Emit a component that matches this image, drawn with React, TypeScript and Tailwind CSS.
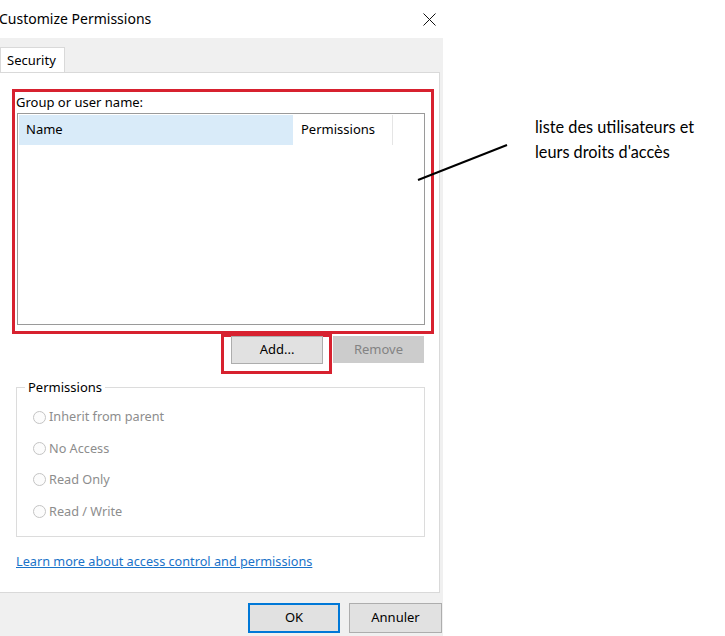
import React from 'react';

const options = ['Inherit from parent', 'No Access', 'Read Only', 'Read / Write'];

export default function App() {
  return (
    <div
      className="relative flex h-[636px] w-[725px] overflow-hidden bg-white text-[12.7px] text-black"
      style={{ fontFamily: '"Noto Sans", "Liberation Sans", sans-serif' }}
    >
      {/* dialog */}
      <div className="flex w-[443px] flex-col">
        <div className="flex h-[38px] items-center justify-between bg-white">
          <span className="-ml-[1px] text-[14px] leading-none">Customize Permissions</span>
          <svg width="13" height="13" viewBox="0 0 13 13" className="mr-[7px]">
            <path d="M0.5 0.5 L12.5 12.5 M12.5 0.5 L0.5 12.5" stroke="#111" strokeWidth="1" />
          </svg>
        </div>

        <div className="flex flex-1 flex-col bg-[#f0f0f0]">
          <div className="mt-[9px] flex">
            <div className="-mb-[1px] flex h-[26px] w-[65px] items-center border border-b-0 border-[#d9d9d9] bg-white pl-[6px] text-[13px]">
              Security
            </div>
          </div>

          <div className="mr-[3px] flex h-[521px] flex-col border border-l-0 border-[#d9d9d9] bg-white pl-[12px]">
            {/* user list */}
            <div className="mt-[16px] flex h-[245px] w-[422px] flex-col border-[3px] border-[#d7212f]">
              <div className="flex h-[21px] items-center pl-[1px] text-[13px]">Group or user name:</div>
              <div className="ml-[2px] flex h-[212px] w-[408px] flex-col border border-[#9a9a9a] p-[1px]">
                <div className="flex h-[30px] text-[13px]">
                  <div className="flex w-[274px] items-center bg-[#d9ebf9] pl-[7px]">Name</div>
                  <div className="flex w-[100px] items-center border-r border-[#e5e5e5] pl-[8px]">Permissions</div>
                </div>
              </div>
            </div>

            {/* buttons */}
            <div className="ml-[209px] flex">
              <div className="h-[40px] w-[111px] border-[3px] border-[#d7212f] pl-[7px]">
                <button className="mt-[-1px] h-[28px] w-[92px] border border-[#adadad] bg-[#e1e1e1] text-[13px]">
                  Add...
                </button>
              </div>
              <button className="ml-[1px] mt-[2px] h-[27px] w-[91px] bg-[#cccccc] text-[13px] text-[#838383]">
                Remove
              </button>
            </div>

            {/* permissions group */}
            <fieldset className="ml-[4px] mt-[5px] h-[158px] w-[409px] border border-[#dcdcdc]">
              <legend className="ml-[8px] px-[3px] text-[13px] leading-[16px]">Permissions</legend>
              <div className="mt-[13px] flex flex-col gap-[13.4px] pl-[16px]">
                {options.map((o) => (
                  <label key={o} className="flex h-[18px] items-center gap-[3px] text-[#8d8d8d]">
                    <span className="h-[13px] w-[13px] rounded-full border border-[#c4c4c4] bg-[#fcfcfc]" />
                    {o}
                  </label>
                ))}
              </div>
            </fieldset>

            <a className="ml-[4px] mt-[15px] w-fit leading-[18px] text-[#1a73c9] underline decoration-[#1a73c9]">
              Learn more about access control and permissions
            </a>
          </div>

          {/* footer */}
          <div className="mr-[1px] mt-[10px] flex justify-end gap-[9px]">
            <button className="h-[30px] w-[92px] border border-[#0078d7] bg-[#e1e1e1] text-[13px] shadow-[inset_0_0_0_1px_#0078d7]">
              OK
            </button>
            <button className="h-[30px] w-[93px] border border-[#adadad] bg-[#e1e1e1] text-[13px]">
              Annuler
            </button>
          </div>
        </div>
      </div>

      {/* annotation */}
      <div
        className="ml-[92px] mt-[114px] text-[16.3px] leading-[25px]"
        style={{ fontFamily: 'Lato, "Open Sans", sans-serif' }}
      >
        <div>liste des utilisateurs et</div>
        <div>leurs droits d'accès</div>
      </div>

      <svg className="pointer-events-none absolute left-0 top-0" width="725" height="636">
        <line x1="418" y1="180" x2="507" y2="145" stroke="#000" strokeWidth="2" />
      </svg>
    </div>
  );
}
